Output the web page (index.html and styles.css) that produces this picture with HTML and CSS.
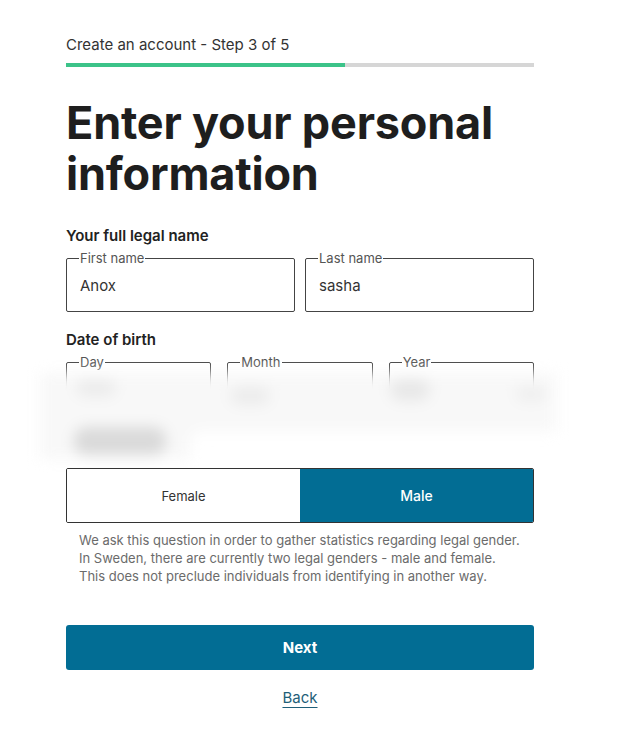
FILE: index.html
```html
<!DOCTYPE html>
<html lang="en">
<head>
<meta charset="utf-8">
<title>Create an account - Step 3 of 5</title>
<link rel="stylesheet" href="styles.css">
</head>
<body>
<main class="page">
  <div class="step">Create an account - Step 3 of 5</div>
  <div class="progress"><div class="progress-fill" style="width:59.6%"></div></div>
  <h1 class="title">Enter your personal information</h1>

  <div class="group-label">Your full legal name</div>
  <div class="row two">
    <fieldset class="field"><legend>First name</legend><span class="value">Anox</span></fieldset>
    <fieldset class="field"><legend>Last name</legend><span class="value">sasha</span></fieldset>
  </div>

  <div class="group-label dob">Date of birth</div>
  <div class="dob-wrap">
    <div class="row three">
      <fieldset class="field"><legend>Day</legend><span class="value"></span></fieldset>
      <fieldset class="field"><legend>Month</legend><span class="value"></span></fieldset>
      <fieldset class="field"><legend>Year</legend><span class="value"></span></fieldset>
    </div>
    <div class="blur">
      <span class="blob b1"></span>
      <span class="blob b2"></span>
      <span class="blob b3"></span>
      <span class="blob b4"></span>
      <span class="blob b5"></span>
      <span class="blob b6"></span>
    </div>
  </div>

  <div class="toggle">
    <button class="opt" type="button">Female</button>
    <button class="opt active" type="button">Male</button>
  </div>
  <p class="hint">We ask this question in order to gather statistics regarding legal gender.<br>In Sweden, there are currently two legal genders - male and female.<br>This does not preclude individuals from identifying in another way.</p>

  <button class="next" type="button">Next</button>
  <div class="back-row"><a class="back" href="#">Back</a></div>
</main>
</body>
</html>
```

FILE: styles.css
```css
* { box-sizing: border-box; }
html, body { margin: 0; padding: 0; background: #fff; }
body {
  font-family: Inter, "Open Sans", "Liberation Sans", sans-serif;
  color: #222;
}
.page {
  width: 468px;
  margin: 0 0 0 66px;
  padding-top: 35px;
}
.step {
  font-size: 15px;
  line-height: 20px;
  color: #333;
}
.progress {
  margin-top: 8px;
  height: 4px;
  background: #d6d6d6;
}
.progress-fill {
  height: 100%;
  background: #3cc389;
}
.title {
  margin: 30px 0 0;
  font-size: 45px;
  line-height: 51px;
  font-weight: 700;
  color: #1e1e1e;
  letter-spacing: -0.2px;
}
.group-label {
  margin-top: 27px;
  font-size: 15px;
  line-height: 20px;
  font-weight: 600;
  color: #222;
}
.group-label.dob { margin-top: 18px; }
.row { display: grid; gap: 10px; margin-top: 4px; }
.row.two { grid-template-columns: 1fr 1fr; }
.row.three { grid-template-columns: 1fr 1fr 1fr; gap: 16px; }
.field {
  margin: 0;
  padding: 0 13px;
  height: 62px;
  border: 1px solid #444;
  border-radius: 2px;
  min-width: 0;
}
.field legend {
  padding: 0 1px;
  margin-left: -1px;
  font-size: 13px;
  line-height: 16px;
  color: #555;
}
.value {
  display: block;
  margin-top: 10px;
  font-size: 15px;
  line-height: 20px;
  color: #333;
}
.dob-wrap { position: relative; }
.blur {
  position: absolute;
  left: -26px;
  right: -22px;
  top: 19px;
  height: 86px;
  background: #f8f8f8;
  filter: blur(7px);
}
.blob {
  position: absolute;
  border-radius: 12px;
  background: #e4e4e4;
}
.b1 { left: 36px; top: 6px; width: 40px; height: 18px; background: #ececec; }
.b2 { left: 190px; top: 14px; width: 40px; height: 18px; background: #ececec; }
.b3 { left: 350px; top: 6px; width: 40px; height: 22px; background: #e8e8e8; }
.b4 { left: 476px; top: 14px; width: 30px; height: 14px; background: #eeeeee; }
.b5 { left: 34px; top: 54px; width: 92px; height: 28px; background: #dadada; }
.b6 { left: 150px; top: 58px; width: 380px; height: 32px; background: #ffffff; }
.toggle {
  margin-top: 52px;
  display: grid;
  grid-template-columns: 1fr 1fr;
  height: 55px;
  border: 1px solid #333;
  border-radius: 2px;
  overflow: hidden;
  position: relative;
  z-index: 1;
  background: #fff;
}
.opt {
  border: 0;
  margin: 0;
  font-family: inherit;
  font-size: 13px;
  color: #333;
  background: #fff;
}
.opt.active {
  background: #026d94;
  color: #fff;
  font-size: 14px;
  font-weight: 500;
}
.hint {
  margin: 8px 0 0 13px;
  font-size: 13px;
  line-height: 18px;
  color: #6b6b6b;
}
.next {
  display: block;
  width: 100%;
  margin-top: 40px;
  height: 45px;
  border: 0;
  border-radius: 3px;
  background: #026d94;
  color: #fff;
  font-family: inherit;
  font-size: 15px;
  font-weight: 700;
}
.back-row {
  margin-top: 17px;
  text-align: center;
}
.back {
  font-size: 15px;
  line-height: 20px;
  color: #1f5f79;
  text-decoration: underline;
  text-underline-offset: 4px;
}
```
